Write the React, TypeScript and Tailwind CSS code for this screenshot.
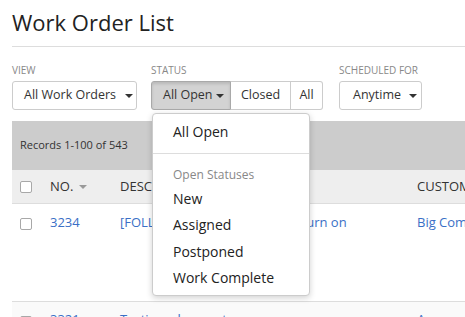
const Caret = ({ className = "" }: { className?: string }) => (
  <svg width="8" height="4" viewBox="0 0 8 4" className={"shrink-0 " + className}>
    <path d="M0 0h8L4 4z" fill="currentColor" />
  </svg>
);

const Check = () => (
  <span className="block w-[12px] h-[12px] rounded-[2px] border border-[#a8a8a8] bg-white" />
);

export default function App() {
  return (
    <div
      className="relative w-[465px] h-[317px] overflow-hidden bg-white text-[#333]"
      style={{ fontFamily: '"Open Sans", sans-serif' }}
    >
      {/* Heading */}
      <div className="pl-3">
        <h1 className="pt-[6px] pb-[8px] text-[22px] leading-[32px] text-[#222]">Work Order List</h1>
        <div className="border-t border-[#ddd]" />
      </div>

      {/* Filters */}
      <div className="flex pl-3 pt-[17px] whitespace-nowrap">
        <div className="flex flex-col shrink-0 mr-[14px]">
          <span className="text-[10px] leading-[12px] text-[#888] mb-[5px]">VIEW</span>
          <button className="h-[29px] w-[125px] flex items-center gap-[9px] pl-[11px] border border-[#ccc] rounded-[3px] text-[12.5px] bg-white">
            All Work Orders <Caret className="text-[#333]" />
          </button>
        </div>
        <div className="flex flex-col shrink-0 mr-[16px]">
          <span className="text-[10px] leading-[12px] text-[#888] mb-[5px]">STATUS</span>
          <div className="flex h-[29px] text-[12.5px]">
            <button className="w-[80px] flex items-center gap-[3px] pl-[11px] bg-[#d3d3d3] border border-[#a9a9a9] rounded-l-[3px] shadow-[inset_0_2px_3px_rgba(0,0,0,0.12)]">
              All Open <Caret className="text-[#333]" />
            </button>
            <button className="w-[60px] border-y border-r border-[#ccc] bg-white">Closed</button>
            <button className="w-[32px] border-y border-r border-[#ccc] rounded-r-[3px] bg-white">All</button>
          </div>
        </div>
        <div className="flex flex-col shrink-0">
          <span className="text-[10px] leading-[12px] text-[#888] mb-[5px]">SCHEDULED FOR</span>
          <button className="h-[29px] w-[83px] flex items-center gap-[8px] pl-[13px] border border-[#ccc] rounded-[3px] text-[12.5px] bg-white">
            Anytime <Caret className="text-[#333]" />
          </button>
        </div>
      </div>

      {/* Table */}
      <div className="ml-3 mt-[11px] overflow-hidden whitespace-nowrap">
        <div className="h-[49px] bg-[#cccccc] flex items-center pl-2 text-[11px] text-[#333]">
          Records 1-100 of 543
        </div>
        <div className="h-[34px] bg-[#eeeeee] border-b border-[#ddd] flex items-center text-[13px] text-[#333]">
          <div className="w-[38px] shrink-0 pl-2"><Check /></div>
          <div className="w-[70px] shrink-0 flex items-center gap-[6px]">NO. <Caret className="text-[#999]" /></div>
          <div className="w-[297px] shrink-0">DESCRIPTION</div>
          <div className="shrink-0">CUSTOMER</div>
        </div>
        <div className="h-[98px] border-b border-[#ddd] flex items-start pt-[9px] text-[13px] text-[#3a6fc6]">
          <div className="w-[38px] shrink-0 pl-2 pt-[5px]"><Check /></div>
          <div className="w-[70px] shrink-0">3234</div>
          <div className="w-[297px] shrink-0">[FOLLOW UP] Tech plans to return on</div>
          <div className="shrink-0">Big Company</div>
        </div>
        <div className="h-[40px] bg-[#fafafa] flex items-start pt-[8px] text-[13px] text-[#3a6fc6]">
          <div className="w-[38px] shrink-0 pl-2 pt-[6px]"><Check /></div>
          <div className="w-[70px] shrink-0">3321</div>
          <div className="w-[297px] shrink-0">Testing a long entry</div>
          <div className="shrink-0">Acme</div>
        </div>
      </div>

      {/* Status menu */}
      <div className="absolute left-[152px] top-[113px] w-[158px] bg-white border border-[#ccc] rounded-[4px] shadow-[0_2px_6px_rgba(0,0,0,0.18)] pb-[4px]">
        <div className="px-5 pt-[6px] pb-[9px] text-[14px] leading-[24px] text-[#222]">All Open</div>
        <div className="border-t border-[#ddd]" />
        <div className="px-5 pt-[12px] pb-[2px] text-[12px] leading-[18px] text-[#888]">Open Statuses</div>
        <div className="px-5 text-[14px] leading-[26.3px] text-[#222]">
          <div>New</div>
          <div>Assigned</div>
          <div>Postponed</div>
          <div>Work Complete</div>
        </div>
      </div>
    </div>
  );
}
